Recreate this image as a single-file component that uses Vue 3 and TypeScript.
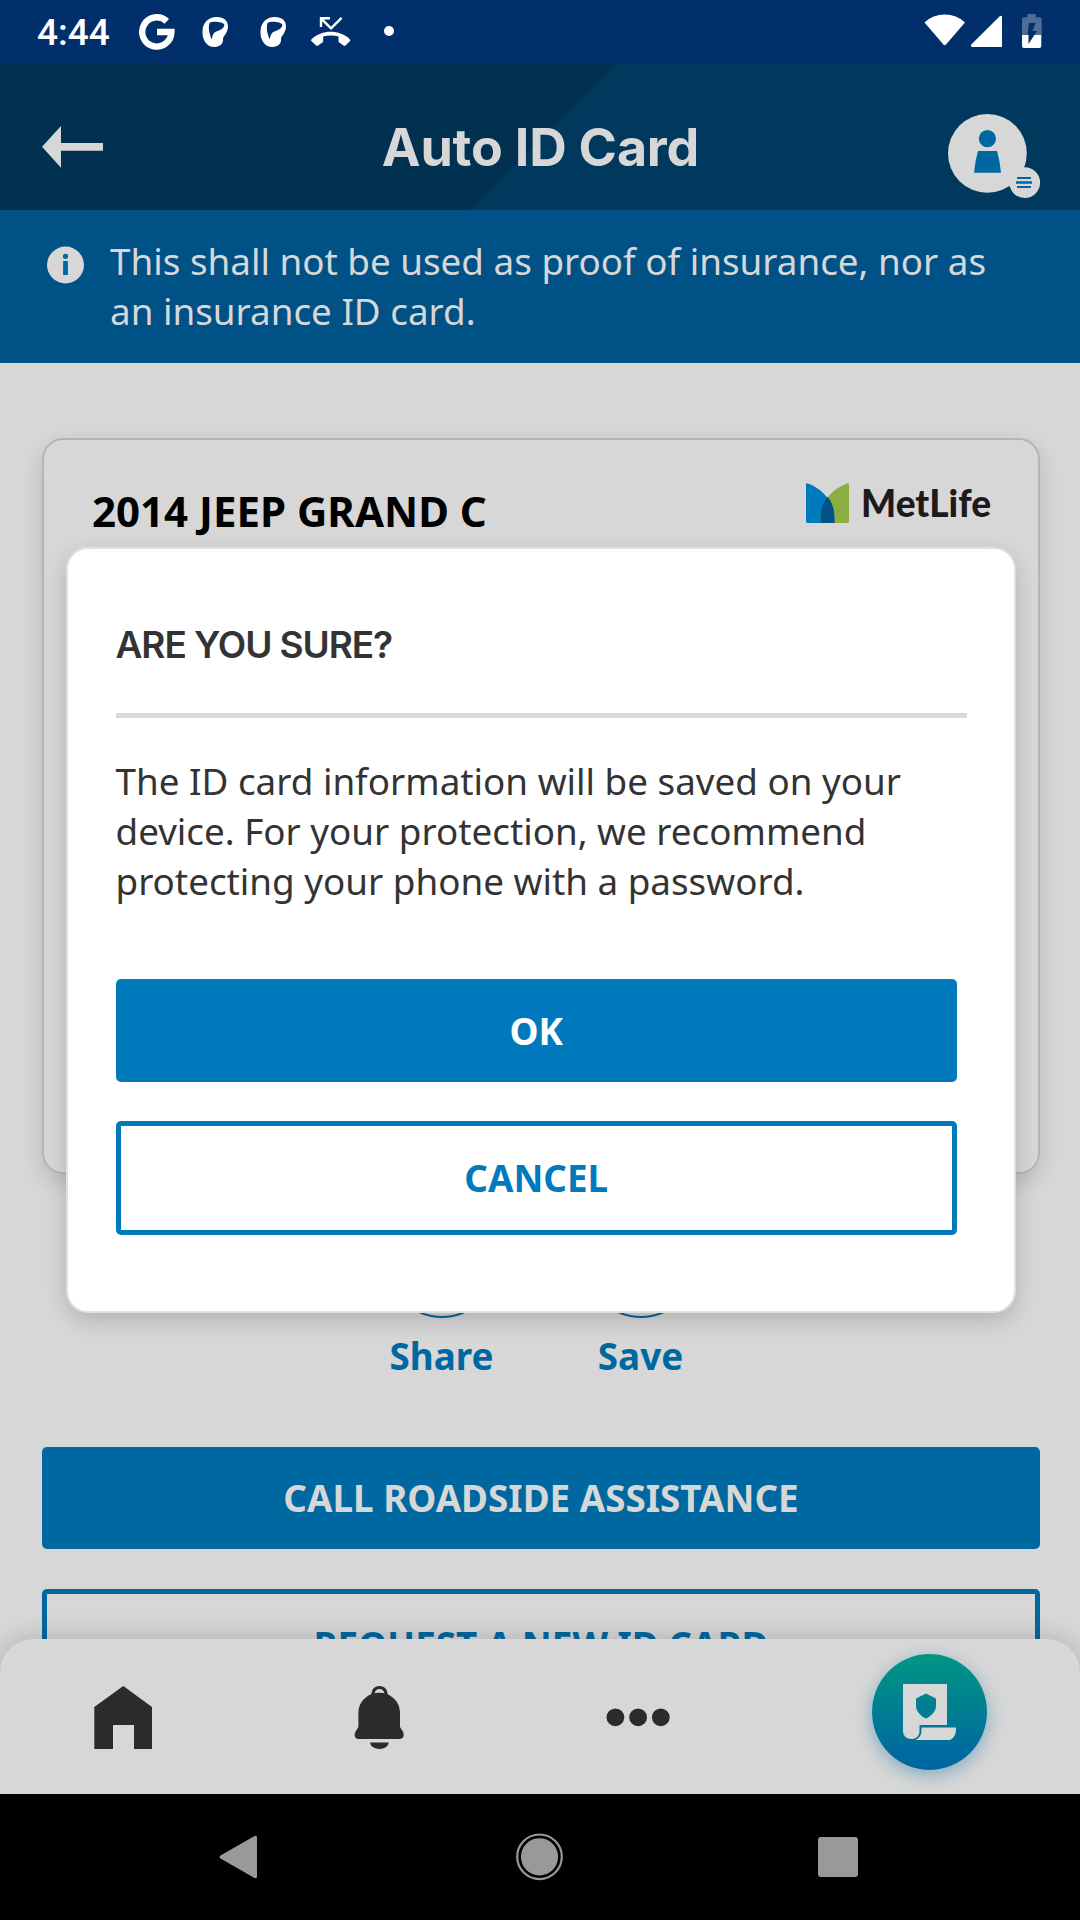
<script setup lang="ts">
const noticeLines: string[] = [
  'This shall not be used as proof of insurance, nor as',
  'an insurance ID card.',
]

const dialogLines: string[] = [
  'The ID card information will be saved on your',
  'device. For your protection, we recommend',
  'protecting your phone with a password.',
]

const actions: string[] = ['Share', 'Save']
</script>

<template>
  <div class="screen">
    <div class="status">
      <span class="time">4:44</span>
      <svg class="s-g" width="38" height="63" viewBox="138 0 38 63">
        <path d="M166.800 21.300A14.600 14.600 0 1 0 171.400 32H157" fill="none" stroke="#fff" stroke-width="6.400" />
      </svg>
      <svg v-for="n in 2" :key="n" class="s-p" width="27" height="63" viewBox="202 0 27 63">
        <path fill="#fff" fill-rule="evenodd" d="M214 17.3C222 16 228.3 19.500 228 27C227.600 33 224 35 223 38.500C223.800 43 220 47 214.500 47C206 47 202 39 202.500 31C203 23 207.500 18.500 214 17.300ZM210 22.500C208.300 25 208.800 30 209.700 33.500C210.300 36 211 38 211.800 39.500C212.500 34.500 213.800 32.300 217 31.200C221 30 224.300 28 224.300 24.800C223.500 21.500 213 21 210 22.500Z" />
      </svg>
      <svg class="s-call" width="40" height="63" viewBox="311 0 40 63">
        <path d="M321 27V18.300H330M321.500 18.800L331 28.300L341.600 17.800" fill="none" stroke="#fff" stroke-width="2.400" />
        <path fill="#fff" d="M311.400 39.500C322 29.300 339.500 29.300 350 39.500Q350.600 40.200 350 41L345.500 45.500Q344.500 46.300 343.500 45.500L339.300 42.500Q338.500 41.900 338.500 40.900V36.600Q331 34.300 323.200 36.600V41Q323.200 42 322.300 42.600L318.200 45.500Q317 46.300 316 45.500L311.400 41Q310.700 40.200 311.400 39.500Z" />
      </svg>
      <i class="s-dot"></i>
      <svg class="s-right" width="120" height="63" viewBox="924 0 120 63">
        <path fill="#fff" d="M924.500 22.500C935 11.700 954.500 11.700 965 22.500L946 44.500Q944.700 46 943.400 44.500Z" />
        <path fill="#fff" d="M1002 17V47H972.500Q970.300 47 971.300 44.500L999.500 16.500Q1002 15 1002 17Z" />
        <path fill="#4d6d98" d="M1027.300 14H1035.700V17.300H1039.500Q1041.700 17.300 1041.700 19.500V35H1022V19.500Q1022 17.300 1024.200 17.300H1027.300Z" />
        <path fill="#fff" d="M1022 35H1041.300V46Q1041.300 48 1039.300 48H1024Q1022 48 1022 46Z" />
        <path fill="#002f6c" d="M1029 23H1035.500L1032.500 31H1037L1028.500 44V34.500H1027.500Z" />
      </svg>
    </div>

    <header class="header">
      <svg width="62" height="147" viewBox="42 63 62 147">
        <path fill="#d7d7d7" d="M42 146.700L61 126V143H103V150.700H61V167.700Z" />
      </svg>
      <h1>Auto ID Card</h1>
      <svg width="94" height="147" viewBox="947 63 94 147">
        <g fill="#d7d7d7">
          <circle cx="987.400" cy="153.400" r="39.400" />
          <circle cx="1024.700" cy="182.600" r="15.400" />
        </g>
        <g fill="#0068a0">
          <circle cx="987.400" cy="138.700" r="8.600" />
          <path d="M978 151H997Q1000 161 1001 172.700H974Q975 161 978 151Z" />
          <path d="M1017 177H1031V179H1017ZM1016 181.300H1032V183.800H1016ZM1017 186H1031V188H1017Z" />
        </g>
      </svg>
    </header>

    <div class="notice">
      <svg width="38" height="38" viewBox="0 0 38 38">
        <circle cx="18.500" cy="19" r="18.500" fill="#d7d7d7" />
        <circle cx="18.500" cy="10.300" r="2.600" fill="#0068a0" />
        <rect x="16.100" y="15" width="4.800" height="14" fill="#0068a0" />
      </svg>
      <p><span v-for="line in noticeLines" :key="line">{{ line }}</span></p>
    </div>

    <main class="content">
      <section class="card">
        <h2>2014 JEEP GRAND C</h2>
        <div class="brand">
          <svg width="43" height="40" viewBox="0 0 43 40">
            <path fill="#007abc" d="M0 1.500Q0 0 2 .4C16 5 28.500 20 28.500 34V40H1.500Q0 40 0 38.500Z" />
            <path fill="#8aae40" d="M43 1.500Q43 0 41 .4C28 4.500 14.700 18 14.700 33V40H41.500Q43 40 43 38.500Z" />
            <path fill="#005186" d="M21.500 13.800C17 19 14.700 26 14.700 33V40H28.500V34C28.500 27 26 19 21.500 13.800Z" />
          </svg>
          <span>MetLife</span>
        </div>
      </section>

      <div class="actions">
        <div v-for="a in actions" :key="a" class="action">
          <i></i>
          <span>{{ a }}</span>
        </div>
      </div>

      <button class="btn call">CALL ROADSIDE ASSISTANCE</button>
      <button class="btn request">REQUEST A NEW ID CARD</button>
    </main>

    <div class="dialog">
      <h3>ARE YOU SURE?</h3>
      <hr />
      <p><span v-for="line in dialogLines" :key="line">{{ line }}</span></p>
      <button class="btn ok">OK</button>
      <button class="btn cancel">CANCEL</button>
    </div>

    <nav class="tabs">
      <svg class="t-home" width="58" height="155" viewBox="94 1639 58 155">
        <path fill="#2b2b2b" d="M94.300 1707L123.300 1686L152 1707V1749H134V1725H113V1749H94.300Z" />
      </svg>
      <svg class="t-bell" width="50" height="155" viewBox="354 1639 50 155">
        <path fill="none" stroke="#2b2b2b" stroke-width="3.200" d="M373 1695V1693.500A6.500 6 0 0 1 386 1693.500V1695" />
        <path fill="#2b2b2b" d="M371.500 1694Q375 1692.800 379.300 1692.800Q383.500 1692.800 387 1694C395.500 1698 400 1704.500 400 1713V1727L403.200 1732Q405 1738.700 400 1739H359Q353 1738.500 355.300 1732L358.400 1727V1713C358.400 1704.500 363 1698 371.500 1694ZM370 1742.500H388.700C388 1751 371 1751 370 1742.500Z" />
      </svg>
      <svg class="t-more" width="64" height="155" viewBox="606 1639 64 155">
        <g fill="#2b2b2b">
          <circle cx="615.400" cy="1717.300" r="8.900" />
          <circle cx="638.100" cy="1717.300" r="8.900" />
          <circle cx="660.800" cy="1717.300" r="8.900" />
        </g>
      </svg>
      <div class="fab">
        <svg width="54" height="57" viewBox="0 0 54 57">
          <path fill="#d7d7d7" fill-rule="evenodd" d="M0 0H44V41H16.500V47C16.500 52 13 55 8.500 55C4 55 0 52 0 47ZM13 14.500V22C13 27 17.500 32 23 34.500C28.500 32 33 27 33 22V14.500L23 9.500Z" />
          <path fill="#d7d7d7" d="M18.500 43.500H53V46C53 51 50 55 46.500 56H12.500C16.500 54 18.500 51 18.500 47Z" />
        </svg>
      </div>
    </nav>

    <div class="sysnav">
      <svg width="1080" height="126" viewBox="0 1794 1080 126">
        <g fill="#999">
          <path d="M220.500 1855.500L254.500 1836Q257 1835 257 1837.500V1876.500Q257 1879 254.500 1878L220.500 1858.500Q218.500 1857 220.500 1855.500Z" />
          <circle cx="539.500" cy="1856.800" r="18.600" />
          <rect x="818" y="1837" width="40" height="40" rx="3" />
        </g>
        <circle cx="539.500" cy="1856.800" r="22.300" fill="none" stroke="#999" stroke-width="2.200" />
      </svg>
    </div>
  </div>
</template>

<style>
body {
  margin: 0;
  background: #000;
}
</style>

<style scoped>
.screen {
  position: relative;
  width: 1080px;
  height: 1920px;
  overflow: hidden;
  display: flex;
  flex-direction: column;
  background: #d7d7d7;
  font-family: 'Noto Sans', sans-serif;
}
svg {
  display: block;
  flex: none;
}
h1, h2, h3, p {
  margin: 0;
}
.status {
  display: flex;
  height: 63px;
  flex: none;
  background: #002f6c;
  padding: 0 36px 0 37px;
}
.time {
  width: 101px;
  font: 500 37px/65px Roboto, sans-serif;
  color: #fff;
}
.s-p {
  margin-left: 26px;
}
.s-p + .s-p {
  margin-left: 31px;
}
.s-call {
  margin-left: 24px;
}
.s-dot {
  width: 10px;
  height: 10px;
  border-radius: 50%;
  background: #fff;
  margin: 26px 0 0 33px;
}
.s-right {
  margin-left: auto;
}
.header {
  height: 147px;
  flex: none;
  display: flex;
  justify-content: space-between;
  padding: 0 39px 0 42px;
  background: linear-gradient(135deg, #003151 0 50%, #00395d 50%) 0 0 / 1087px 147px;
}
.header h1 {
  font: 700 52px/170px Inter, sans-serif;
  letter-spacing: -0.2px;
  color: #d7d7d7;
  white-space: nowrap;
  margin-left: 30px;
}
.notice {
  height: 153px;
  flex: none;
  box-sizing: border-box;
  display: flex;
  padding: 26px 0 0 47px;
  background: #005186;
  color: #d7d7d7;
}
.notice svg {
  margin: 10px 25px 0 0;
}
.notice p,
.dialog p {
  font-size: 36.800px;
  line-height: 50px;
}
.notice span,
.dialog p span {
  display: block;
  white-space: nowrap;
}
.content {
  display: flex;
  flex-direction: column;
  padding: 75px 40px 0 42px;
}
.card {
  height: 736px;
  flex: none;
  box-sizing: border-box;
  display: flex;
  justify-content: space-between;
  align-items: flex-start;
  padding: 42px 47px 0 48px;
  border: 2px solid #b5b5b0;
  border-radius: 21px;
  box-shadow: 0 8px 22px rgba(0, 0, 0, 0.14);
}
.card h2 {
  font-size: 42px;
  line-height: 58px;
  font-weight: 700;
  color: #000;
}
.brand {
  display: flex;
  gap: 12px;
  margin-top: 1px;
}
.brand span {
  font: 900 37px/40px Lato, sans-serif;
  color: #1e1a1b;
}
.actions {
  display: flex;
  justify-content: center;
  gap: 91px;
  margin-top: 36px;
  height: 237px;
  flex: none;
}
.action {
  width: 108px;
  display: flex;
  flex-direction: column;
  align-items: center;
}
.action i {
  width: 108px;
  height: 108px;
  box-sizing: border-box;
  border: 2px solid #0068a0;
  border-radius: 50%;
}
.action span {
  font-size: 36.800px;
  line-height: 50px;
  font-weight: 700;
  color: #0068a0;
  margin-top: 13px;
}
.btn {
  box-sizing: border-box;
  display: block;
  flex: none;
  margin: 0;
  padding: 0;
  border: 0;
  border-radius: 5px;
  font: 700 36.800px/50px 'Noto Sans', sans-serif;
}
.call {
  height: 102px;
  background: #0068a0;
  color: #d7d7d7;
}
.request {
  height: 112px;
  margin-top: 40px;
  background: none;
  border: 5px solid #0068a0;
  color: #0068a0;
}
.dialog {
  position: absolute;
  left: 66px;
  top: 547px;
  width: 950px;
  height: 766px;
  box-sizing: border-box;
  display: flex;
  flex-direction: column;
  padding: 69px 47.500px 0 47.500px;
  border: 2px solid #e0dfda;
  border-radius: 22px;
  background: #fff;
  color: #333;
  box-shadow: 0 8px 22px rgba(0, 0, 0, 0.17);
}
.dialog h3 {
  font: 600 37px/54px Inter, sans-serif;
  letter-spacing: -1.080px;
}
.dialog hr {
  width: 100%;
  height: 5px;
  flex: none;
  border: 0;
  margin: 41px 0 0;
  background: #d9d9d6;
}
.dialog p {
  margin-top: 38px;
}
.dialog .btn {
  width: 841.500px;
}
.ok {
  height: 103px;
  margin-top: 73px;
  background: #007abc;
  color: #fff;
}
.cancel {
  height: 114px;
  margin-top: 39px;
  background: #fff;
  border: 5px solid #007abc;
  color: #007abc;
}
.tabs {
  position: absolute;
  left: 0;
  right: 0;
  bottom: 126px;
  height: 155px;
  display: flex;
  background: #d7d7d7;
  border-radius: 33px 33px 0 0;
  box-shadow: 0 0 28px rgba(0, 0, 0, 0.2);
}
.t-home {
  margin-left: 94px;
}
.t-bell {
  margin-left: 202px;
}
.t-more {
  margin-left: 202px;
}
.fab {
  width: 115px;
  height: 116px;
  margin: 15px 0 0 202px;
  box-sizing: border-box;
  padding: 30px 0 0 31px;
  border-radius: 50%;
  background: linear-gradient(#009485 5%, #0068a0 90%);
  box-shadow: 0 5px 18px rgba(0, 104, 160, 0.4);
}
.sysnav {
  position: absolute;
  left: 0;
  bottom: 0;
  background: #000;
}
</style>
